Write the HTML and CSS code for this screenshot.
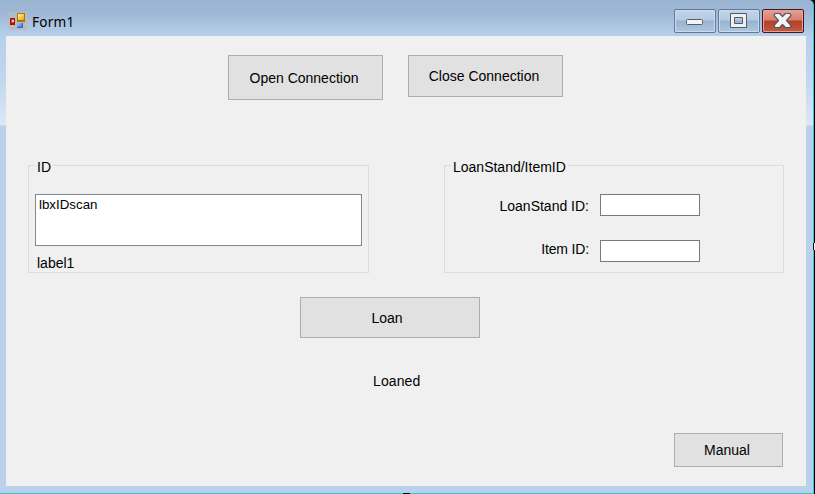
FILE: index.html
```html
<!DOCTYPE html>
<html lang="en">
<head>
<meta charset="utf-8">
<title>Form1</title>
<link rel="stylesheet" href="styles.css">
</head>
<body>
<div class="window">
  <header class="titlebar">
    <svg class="app-icon" width="18" height="18" viewBox="0 0 18 18" shape-rendering="crispEdges">
      <defs>
        <linearGradient id="gold" x1="0" y1="0" x2="1" y2="1"><stop offset="0" stop-color="#fff4a6"/><stop offset="1" stop-color="#e6a600"/></linearGradient>
        <linearGradient id="blue" x1="0" y1="0" x2="1" y2="1"><stop offset="0" stop-color="#a3c7ff"/><stop offset="1" stop-color="#3c79e5"/></linearGradient>
      </defs>
      <path fill="#b8bcc2" d="M0 0h18v18H0z"/>
      <path fill="#a8bdd6" d="M1 1h5v4H1z"/>
      <path fill="#a61208" d="M1 6h5v7H1z"/>
      <path fill="#d83a2c" d="M2 7h3v4H2z"/>
      <path fill="#ffc9bd" d="M3 8h2v2H3z"/>
      <path fill="#ab7609" d="M8 1h8v9H8z"/>
      <path fill="url(#gold)" d="M9 2h6v6H9z"/>
      <path fill="#3266bd" d="M8 11h6v5H8z"/>
      <path fill="url(#blue)" d="M8 11h5v4H8z"/>
    </svg>
    <span class="title">Form1</span>
    <div class="controls">
      <div class="ctl">
        <svg width="42" height="24" viewBox="0 0 42 24"><rect x="12.5" y="10.5" width="16" height="5" rx="1" fill="#f4f4f4" stroke="#565d6b"/></svg>
      </div>
      <div class="ctl">
        <svg width="42" height="24" viewBox="0 0 42 24"><path fill="#f0f0f0" fill-rule="evenodd" stroke="#535a68" d="M12.500 4.500h16v14h-16zM16.500 8.500v6h8v-6z"/></svg>
      </div>
      <div class="ctl close">
        <svg width="42" height="24" viewBox="0 0 42 24"><path fill="#f3f3f3" stroke="#535764" stroke-width="1.200" stroke-linejoin="round" d="M13 4.500h4.500l3 3 3-3H28l1 2-4.500 5 4.500 5-1 2h-4.500l-3-3-3 3H13l-1-2 4.500-5-4.500-5z"/></svg>
      </div>
    </div>
  </header>
  <main class="client">
    <div class="connections">
      <button class="btn open">Open Connection</button>
      <button class="btn shut">Close Connection</button>
    </div>
    <div class="groups">
      <section class="group id-group">
        <h2 class="legend">ID</h2>
        <div class="listbox">lbxIDscan</div>
        <div class="label">label1</div>
      </section>
      <section class="group item-group">
        <h2 class="legend">LoanStand/ItemID</h2>
        <div class="fields">
          <label for="stand">LoanStand ID:</label><input id="stand" type="text">
          <label for="item" class="item-label">Item ID:</label><input id="item" type="text">
        </div>
      </section>
    </div>
    <button class="btn loan">Loan</button>
    <div class="status">Loaned</div>
    <button class="btn manual">Manual</button>
  </main>
  <i class="handle right"></i>
  <i class="handle bottom"></i>
</div>
</body>
</html>
```

FILE: styles.css
```css
* { box-sizing: border-box; }
body {
  margin: 0;
  background: #000;
  font: 14px/16px "Liberation Sans", Arial, sans-serif;
  color: #000;
  overflow: hidden;
}
.window {
  position: relative;
  width: 814px;
  height: 494px;
  padding: 0 7px 7px 6px;
  border-right: 1px solid #2fc0e8;
  border-bottom: 1px solid #45bedb;
  border-top-right-radius: 5px;
  background: linear-gradient(#9ab4d1 0, #9db7d4 12px, #b7cfe9 36px, #c3d7ee 80px, #dce8f5 125px, #b9d1ea 126px);
}
.titlebar {
  display: flex;
  align-items: flex-start;
  height: 36px;
  padding-left: 3px;
}
.app-icon { margin-top: 12px; }
.title {
  margin: 12px 0 0 5px;
  font: 13.6px/19px "Noto Sans", sans-serif;
  letter-spacing: 0.2px;
}
.controls {
  display: flex;
  gap: 2px;
  margin: 9px 2px 0 auto;
}
.ctl {
  width: 42px;
  height: 24px;
  border: 1px solid #64799a;
  border-radius: 2px;
  box-shadow: inset 0 0 0 1px #c9dbee;
  background: linear-gradient(#c2d5e9 0, #b5cae1 10px, #98b3d0 11px, #aec7e1 100%);
}
.ctl svg { display: block; margin: -1px; }
.close {
  border-color: #4b1421;
  box-shadow: inset 0 0 0 1px #e4a299;
  background: linear-gradient(#e3a196 0, #d77e70 10px, #b53f28 11px, #c35a43 100%);
}
.client {
  display: flex;
  flex-direction: column;
  height: 450px;
  padding-top: 19px;
  background: #f0f0f0;
}
.btn {
  padding: 0 0 1px;
  border: 1px solid #adadad;
  border-radius: 0;
  background: #e1e1e1;
  font: inherit;
  color: inherit;
}
.connections {
  display: flex;
  align-items: flex-start;
  gap: 25px;
  height: 110px;
  padding-left: 222px;
}
.open { width: 155px; height: 45px; padding: 1px 3px 0 0; }
.shut { width: 155px; height: 42px; padding: 0 3px 0 0; }
.groups {
  display: flex;
  gap: 75px;
  padding-left: 22px;
}
.group {
  display: flex;
  flex-direction: column;
  align-items: flex-start;
  height: 108px;
  border: 1px solid #dcdcdc;
}
.id-group { width: 341px; padding-left: 6px; }
.item-group { width: 340px; padding-left: 6px; }
.legend {
  height: 16px;
  margin: -7px 0 0;
  padding: 0 2px;
  background: #f0f0f0;
  font: inherit;
}
.listbox {
  width: 327px;
  height: 52px;
  margin-top: 19px;
  padding: 2px 3px;
  border: 1px solid #828790;
  background: #fff;
  font-size: 13.33px;
}
.label { margin: 9px 0 0 2px; }
.fields {
  display: grid;
  grid-template-columns: 138px 100px;
  column-gap: 11px;
  row-gap: 24px;
  margin-top: 19px;
  text-align: right;
}
.fields label { padding-top: 4px; }
.fields .item-label { padding-top: 1px; letter-spacing: -0.15px; }
.fields input {
  width: 100px;
  height: 22px;
  padding: 2px;
  border: 1px solid #7a7a7a;
  border-radius: 0;
  background: #fff;
}
.loan {
  width: 180px;
  height: 41px;
  margin: 24px 0 0 294px;
  padding: 1px 6px 0 0;
}
.status { margin: 35px 0 0 367px; letter-spacing: 0.1px; }
.manual {
  width: 109px;
  height: 34px;
  margin: 44px 0 0 668px;
  padding: 0 3px 0 0;
}
.handle { position: absolute; }
.right { right: -2px; top: 243px; width: 2px; height: 7px; background: #fff; border-left: 1px solid #000; }
.bottom { left: 403px; bottom: -1px; width: 7px; height: 1px; background: #000; }
```
